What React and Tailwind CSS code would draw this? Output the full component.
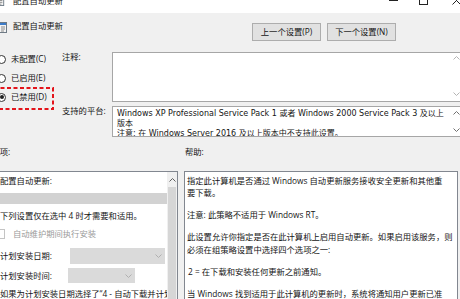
import React from "react";

const Chev = ({ up, color = "#606060" }) => (
  <svg width="7" height="4" viewBox="0 0 7 4" className="block">
    <polyline
      points={up ? "0.5,3.5 3.5,0.5 6.5,3.5" : "0.5,0.5 3.5,3.5 6.5,0.5"}
      fill="none"
      stroke={color}
      strokeWidth="1"
    />
  </svg>
);

const PolicyIcon = ({ w, h }) => (
  <svg width={w} height={h} viewBox="0 0 8 12" className="block">
    <rect x="0.5" y="1.5" width="7" height="10" fill="#f4f4f4" stroke="#6f7b86" strokeWidth="1" />
    <rect x="1" y="2" width="6" height="2" fill="#3d7cc9" />
    <line x1="2" y1="6" x2="6" y2="6" stroke="#8a8a8a" strokeWidth="1" />
    <line x1="2" y1="8" x2="6" y2="8" stroke="#8a8a8a" strokeWidth="1" />
    <line x1="2" y1="10" x2="5" y2="10" stroke="#8a8a8a" strokeWidth="1" />
  </svg>
);

const Radio = ({ checked, label }) => (
  <div className="h-[12px] flex items-center">
    <div className="ml-[7px] w-[9px] h-[9px] rounded-full border border-[#333] bg-white flex items-center justify-center">
      {checked && <div className="w-[4px] h-[4px] rounded-full bg-[#222]" />}
    </div>
    <span className="ml-[5px]">{label}</span>
  </div>
);

export default function App() {
  return (
    <div className="w-[460px] h-[299px] overflow-hidden bg-[#f0f0f0] font-['Open_Sans','Noto_Sans_CJK_SC',sans-serif] text-[8.3px] leading-[12px] text-[#141414]">
      <div className="-ml-[10px] -mt-[12px] w-[485px]">
        {/* title bar */}
        <div className="h-[25px] bg-white flex items-center">
          <div className="ml-[6px]">
            <PolicyIcon w={9} h={11} />
          </div>
          <span className="ml-[8px]">配置自动更新</span>
          <div className="ml-auto flex h-full">
            <div className="w-[30px] flex items-center justify-center">
              <svg width="9" height="9" viewBox="0 0 9 9" className="block">
                <line x1="0" y1="4.5" x2="9" y2="4.5" stroke="#222" strokeWidth="1" />
              </svg>
            </div>
            <div className="w-[30px] flex items-center justify-center">
              <svg width="9" height="9" viewBox="0 0 9 9" className="block">
                <rect x="0.5" y="0.5" width="8" height="8" fill="none" stroke="#222" strokeWidth="1" />
              </svg>
            </div>
            <div className="w-[37px] flex items-center justify-center">
              <svg width="9" height="9" viewBox="0 0 9 9" className="block">
                <line x1="0.5" y1="0.5" x2="8.5" y2="8.5" stroke="#222" strokeWidth="1" />
                <line x1="8.5" y1="0.5" x2="0.5" y2="8.5" stroke="#222" strokeWidth="1" />
              </svg>
            </div>
          </div>
        </div>

        {/* header row */}
        <div className="flex items-start h-[39px]">
          <div className="ml-[9px] mt-[8px]">
            <PolicyIcon w={8} h={12} />
          </div>
          <span className="ml-[6px] mt-[6.5px]">配置自动更新</span>
          <div className="ml-auto mr-[79px] mt-[9.7px] flex gap-[6px]">
            <button className="w-[69px] h-[18.5px] border border-[#adadad] bg-[#e1e1e1] flex items-center justify-center">
              上一个设置(P)
            </button>
            <button className="w-[69px] h-[18.5px] border border-[#adadad] bg-[#e1e1e1] flex items-center justify-center">
              下一个设置(N)
            </button>
          </div>
        </div>

        {/* state + comment + platform */}
        <div className="grid grid-cols-[72px_50px_350px] grid-rows-[50px_31.5px] gap-y-[3.5px]">
          <div className="row-span-2 relative flex flex-col pt-[1px] gap-[7px]">
            <Radio label="未配置(C)" />
            <Radio label="已启用(E)" />
            <Radio checked label="已禁用(D)" />
            <svg
              className="absolute left-[3px] top-[34.5px]"
              width="61"
              height="23"
              viewBox="0 0 61 23"
            >
              <rect
                x="1"
                y="1"
                width="59"
                height="21"
                fill="none"
                stroke="#e3141b"
                strokeWidth="2"
                strokeDasharray="4 2.5"
              />
            </svg>
          </div>
          <div className="-mt-[1px]">注释:</div>
          <div className="border border-[#a6a6a6] bg-white flex justify-end">
            <div className="w-[10px] flex flex-col items-center justify-between pt-[3px] pb-[5px]">
              <Chev up color="#b4b4b4" />
              <Chev color="#b4b4b4" />
            </div>
          </div>
          <div className="-mt-[0.5px] whitespace-nowrap">支持的平台:</div>
          <div className="border border-[#a6a6a6] bg-white flex overflow-hidden">
            <div className="flex-1 pl-[4px] pt-[2.5px] leading-[10.2px] whitespace-nowrap overflow-hidden font-['DejaVu_Sans','Noto_Sans_CJK_SC',sans-serif] text-[8px]">
              <div>Windows XP Professional Service Pack 1 或者 Windows 2000 Service Pack 3 及以上</div>
              <div>版本</div>
              <div>注意: 在 Windows Server 2016 及以上版本中不支持此设置。</div>
            </div>
            <div className="w-[10px] flex flex-col items-center pt-[4.5px] gap-[13px]">
              <Chev up color="#707070" />
              <Chev color="#707070" />
            </div>
          </div>
        </div>

        {/* section labels */}
        <div className="flex h-[12px] mt-[9px]">
          <div className="w-[195px] pl-[1.5px]">选项:</div>
          <div>帮助:</div>
        </div>

        {/* panels */}
        <div className="flex mt-[13px]">
          <div className="w-[188px] h-[130px] border border-[#828790] bg-white flex">
            <div className="flex-1 flex flex-col pl-[9px] pt-[3px] whitespace-nowrap overflow-hidden">
              <div>配置自动更新:</div>
              <div className="mt-[6px] h-[15px] bg-[#d2d2d2]" />
              <div className="mt-[6px]">下列设置仅在选中 4 时才需要和适用。</div>
              <div className="mt-[6px] h-[12px] flex items-center">
                <div className="-ml-[5px] w-[10px] h-[10px] border border-[#c4c4c4] bg-white" />
                <span className="ml-[8px] text-[#9a9a9a]">自动维护期间执行安装</span>
              </div>
              <div className="mt-[8px] h-[16px] flex items-center">
                <div className="w-[70px]">计划安装日期:</div>
                <div className="w-[95px] h-[16px] bg-[#dadada] flex items-center justify-end pr-[3px]">
                  <Chev color="#b0b0b0" />
                </div>
              </div>
              <div className="mt-[4px] h-[15px] flex items-center">
                <div className="w-[68px]">计划安装时间:</div>
                <div className="w-[67px] h-[15px] bg-[#dadada] flex items-center justify-end pr-[3px]">
                  <Chev color="#b0b0b0" />
                </div>
              </div>
              <div className="mt-[5px]">如果为计划安装日期选择了“4 - 自动下载并计划安装”，则</div>
            </div>
            <div className="w-[10px] bg-[#f0f0f0] flex flex-col items-center pt-[6px]">
              <Chev up color="#606060" />
              <div className="mt-[5px] w-[8px] flex-1 bg-[#d6d6d6]" />
            </div>
          </div>
          <div className="ml-[6px] w-[274px] h-[130px] border border-[#828790] bg-white pl-[2px] pt-[2.5px] leading-[12.3px] whitespace-nowrap overflow-hidden">
            <div>指定此计算机是否通过 Windows 自动更新服务接收安全更新和其他重</div>
            <div>要下载。</div>
            <div className="mt-[10px]">注意: 此策略不适用于 Windows RT。</div>
            <div className="mt-[10px]">此设置允许你指定是否在此计算机上启用自动更新。如果启用该服务，则</div>
            <div>必须在组策略设置中选择四个选项之一:</div>
            <div className="mt-[10px] pl-[1px]">2 = 在下载和安装任何更新之前通知。</div>
            <div className="mt-[10px]">当 Windows 找到适用于此计算机的更新时，系统将通知用户更新已准</div>
          </div>
        </div>
      </div>
    </div>
  );
}
